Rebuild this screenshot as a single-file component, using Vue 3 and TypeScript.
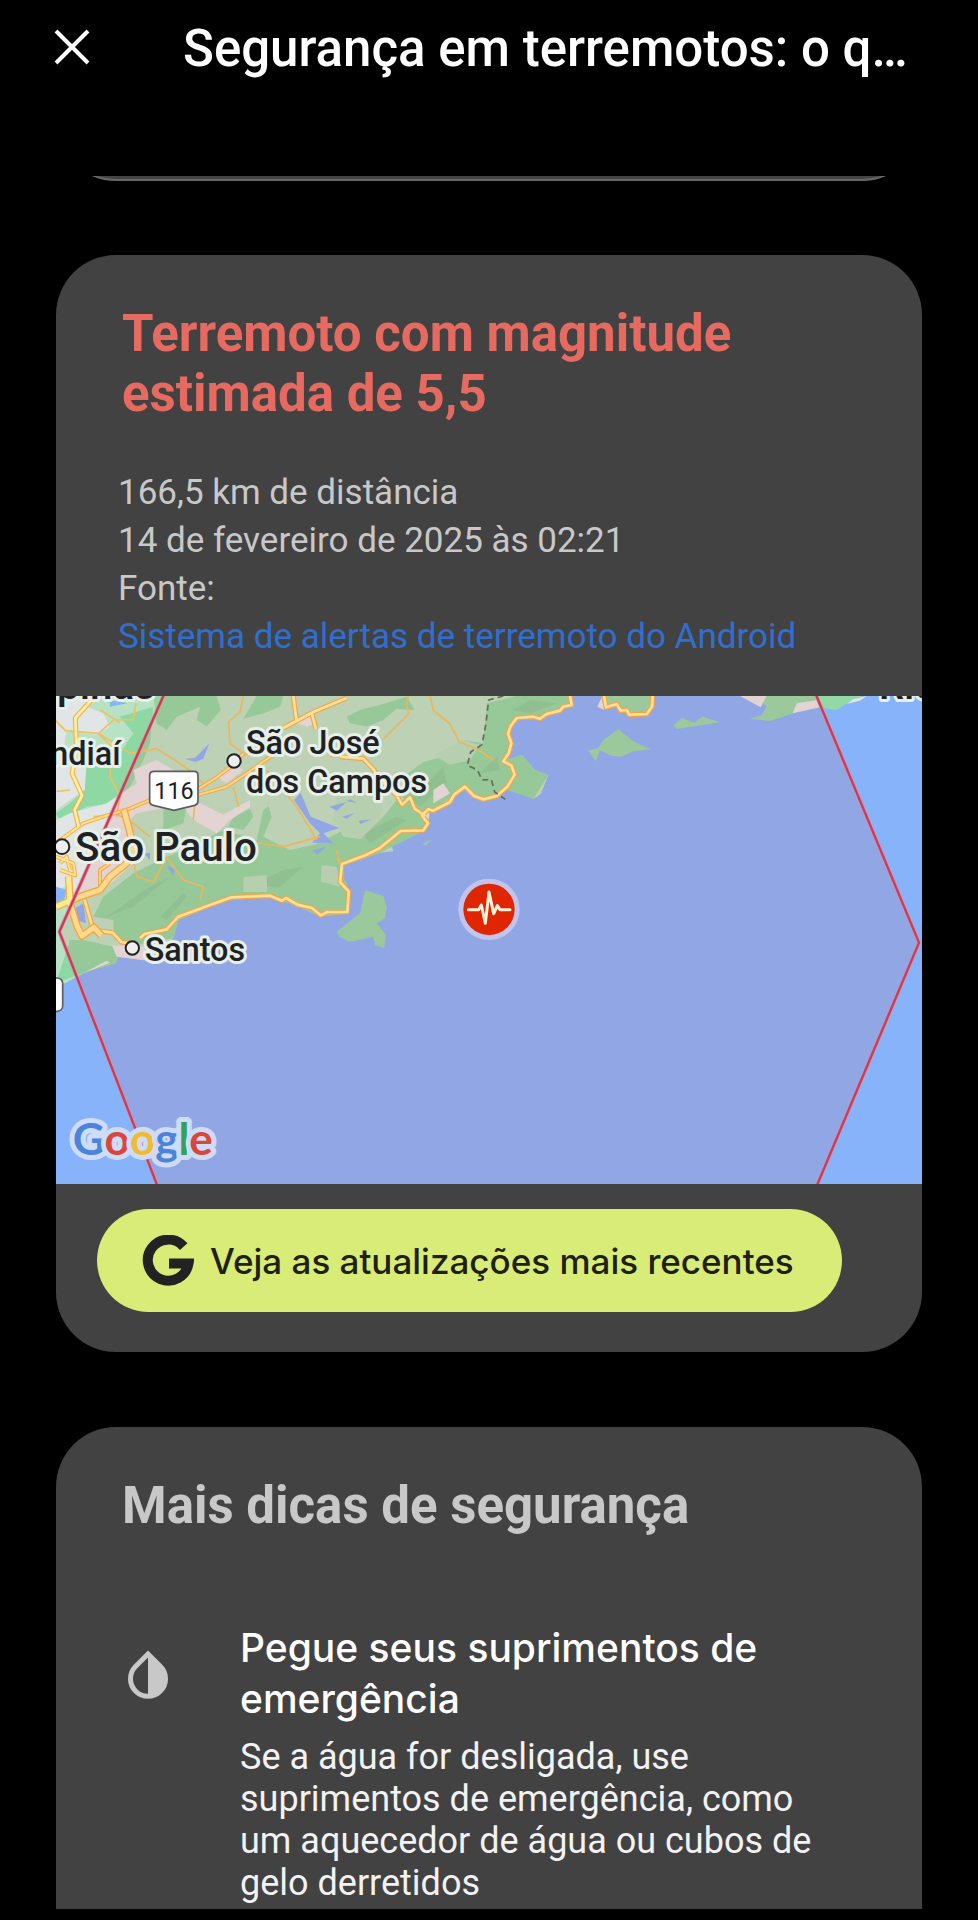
<script setup lang="ts">
interface Tip {
  title: string
  body: string
}

const title = 'Segurança em terremotos: o que fazer'
const details: string[] = ['166,5 km de distância', '14 de fevereiro de 2025 às 02:21', 'Fonte:']
const tips: Tip[] = [
  {
    title: 'Pegue seus suprimentos de emergência',
    body: 'Se a água for desligada, use suprimentos de emergência, como um aquecedor de água ou cubos de gelo derretidos',
  },
]

const majorRoads: string[] = [
  'M1560 18 L1565 45 L1540 50 L1530 62 L1490 72 L1470 86 L1450 80 L1400 84 L1382 108 L1374 130 L1384 160 L1376 190 L1360 214 L1384 226 L1394 254 L1372 290 L1340 318 L1300 328 L1272 318 L1245 290 L1212 314 L1200 336 L1150 362 L1135 358 L1116 376 L1134 400 L1120 421 L1052 423 L990 474 L950 494 L876 522 L870 576 L896 604 L892 666 L832 666 L812 676 L786 654 L742 644 L708 624 L696 632 L660 617 L545 622 L480 645 L385 680 L350 718 L284 732 L270 745',
  'M1662 18 L1668 52 L1700 42 L1712 62 L1730 60 L1738 74 L1790 72 L1806 50 L1808 18',
  'M870 200 L940 206 L972 240 L984 262 L1040 316 L1056 344 L1080 322 L1094 356 L1126 378',
  'M730 18 L740 96 M700 114 L790 66 L890 24 M786 72 L798 118',
  'M130 24 L76 84 L80 180 L66 250 L96 316 L74 360 L86 410',
  'M104 630 L130 720 L188 728 L214 756 L240 760',
]
const mediumRoads: string[] = [
  'M18 460 L58 430 L100 400 L160 380 L240 356 L300 330',
  'M440 316 L530 290 L590 250 L690 180',
  'M440 300 L500 262 L540 232 L580 190',
  'M18 500 L70 520 L76 556 L30 540',
  'M150 600 L150 540 L180 520',
  'M30 520 L50 500 L60 540',
]
const motorways: string[] = [
  'M222 360 L238 420 L250 470 L230 520 L180 560 L150 600 L90 620 L18 650',
  'M56 560 L60 640 L82 710 L96 738 L132 712 L154 736',
]
const minorRoads: string[] = [
  'M18 92 L46 122 L146 130 L240 190 L320 176 L380 214 L430 250 L470 290',
  'M146 130 L190 90 L250 88 L258 40 M150 60 L210 98',
  'M146 130 L184 170 L180 260 L210 320 L200 380',
  'M580 18 L570 66 L536 96 L540 160 L580 190 L620 200',
  'M1076 18 L1070 40 L1076 72 L1000 148 M1140 18 L1150 60 L1200 102 L1228 156 L1286 180 L1330 210',
  'M550 290 L566 350 M436 320 L430 390 M650 240 L740 350 L800 450 M560 450 L700 470 L810 440',
  'M244 480 L260 560 L310 576 L350 500 M350 500 L400 570 L460 590 L450 630 M60 300 L20 304',
  'M860 480 L870 530 M840 200 L890 204 M130 380 L200 372 L250 400 L300 440',
]
</script>

<template>
  <div class="page">
    <header class="bar">
      <button class="close" type="button" aria-label="Fechar">
        <svg viewBox="0 0 36 36" aria-hidden="true"><path d="M2 2 L34 34 M34 2 L2 34" /></svg>
      </button>
      <h1>{{ title }}</h1>
    </header>

    <main>
      <div class="previous"><div class="previous-card"></div></div>

      <section class="card">
        <h2 class="alert">Terremoto com magnitude estimada de 5,5</h2>
        <div class="details">
          <p v-for="line in details" :key="line">{{ line }}</p>
          <a href="#fonte">Sistema de alertas de terremoto do Android</a>
        </div>

        <svg class="map" viewBox="18 18 2598 1464" preserveAspectRatio="xMidYMid slice" role="img" aria-label="Mapa da área afetada">
          <rect class="sea" x="0" y="0" width="2640" height="1500" />
          <path class="plain" d="M0 0 H1560 L1565 45 L1470 86 L1400 84 L1376 120 L1384 160 L1362 212 L1415 195 L1455 240 L1495 256 L1472 312 L1450 327 L1420 310 L1372 300 L1300 330 L1245 292 L1200 338 L1140 366 L1120 378 L1136 400 L1120 424 L1086 436 L1050 448 L1026 470 L1030 484 L990 488 L876 528 L872 576 L898 606 L894 670 L812 680 L742 648 L660 620 L545 626 L480 650 L385 690 L370 745 L290 812 L205 800 L195 822 L175 816 L100 850 L45 880 L0 892 Z" />
          <g class="forest">
            <path d="M310 18 L500 18 L512 60 L470 110 L440 90 L450 50 L380 80 L350 120 L320 100 Z" />
            <path d="M620 18 H700 L690 50 L640 70 L580 86 Z" />
            <path d="M210 80 L310 50 L300 160 L280 210 L240 290 L190 340 L110 350 L30 390 L18 370 L60 340 L104 300 L110 230 L210 190 L250 130 Z" />
            <path d="M520 420 L620 450 L640 360 L655 348 L665 380 L640 440 L720 480 L800 462 L880 420 L930 448 L1000 380 L1040 330 L1060 350 L1060 260 L1120 216 L1180 200 L1240 150 L1300 160 L1310 40 L1400 18 L1560 18 L1565 45 L1470 86 L1400 84 L1376 120 L1384 160 L1362 212 L1415 195 L1455 240 L1495 256 L1450 327 L1372 300 L1300 330 L1245 292 L1140 366 L1136 400 L1120 424 L1026 470 L990 488 L876 528 L898 606 L894 670 L812 680 L742 648 L660 620 L545 626 L480 650 L385 690 L370 745 L230 770 L190 740 L190 690 L130 680 L160 620 L250 550 L330 510 L400 480 Z" />
            <path d="M18 880 L60 750 L100 750 L190 770 L205 800 L195 822 L100 848 Z" />
            <path d="M890 80 L930 60 L1000 42 L1070 20 L1094 60 L1040 56 L1000 90 L950 110 L900 100 Z" />
            <path d="M535 410 L550 380 L600 356 L610 380 L580 420 Z M340 360 L410 350 L400 400 L340 420 Z" />
          </g>
          <g class="ridge">
            <path d="M170 680 L300 590 L360 560 L250 650 Z M330 680 L400 610 L410 620 L350 690 Z M600 590 L700 540 L760 530 L690 590 Z M940 430 L1040 380 L1070 390 L960 460 Z M1080 330 L1180 230 L1190 280 L1110 350 Z M1290 250 L1340 200 L1350 240 Z M1390 60 L1440 30 L1520 40 L1440 70 Z" />
          </g>
          <g class="clearing">
            <path d="M860 320 L930 280 L980 320 L1000 360 L960 420 L930 448 L880 440 L850 390 Z" />
            <path d="M1150 196 L1240 150 L1290 165 L1260 210 L1200 224 Z M580 560 L650 556 L652 606 L580 606 Z M815 525 L860 530 L870 590 L812 575 Z" />
          </g>
          <g class="town">
            <path d="M18 18 H170 L110 50 L160 70 L180 110 L140 134 L50 122 L40 180 L110 190 L104 300 L18 360 Z" />
            <path d="M18 390 L60 370 L170 340 L260 280 L250 240 L320 210 L370 240 L420 300 L360 350 L260 370 L230 400 L260 440 L250 520 L160 600 L90 620 L50 590 L18 600 Z" />
            <path d="M400 350 L450 340 L520 374 L600 330 L600 352 L540 390 L500 430 L430 390 Z" />
            <path d="M500 260 L550 220 L580 240 L530 280 Z M740 100 L790 66 L800 100 L770 110 Z M186 766 L290 770 L300 812 L200 800 Z M100 850 L170 812 L180 818 Z M1150 300 L1180 280 L1200 310 L1150 340 Z" />
          </g>
          <g class="sea">
            <path d="M404 206 L435 204 L478 160 L460 206 L436 216 Z M178 30 L232 40 L180 50 Z" />
            <path d="M732 330 L752 308 L782 380 L868 414 L820 430 L850 460 L786 458 L810 430 L780 400 Z M838 350 L890 336 L860 362 Z M876 380 L912 370 L890 386 Z M926 392 L966 388 L930 402 Z M890 334 L920 338 L900 328 Z M790 480 L830 470 L800 494 Z" />
            <path d="M350 524 L374 540 L370 560 Z M18 590 L50 600 L40 640 L18 650 Z M66 660 L100 640 L108 700 L80 690 Z M280 490 L300 488 L300 510 Z M880 560 L892 540 L900 600 Z" />
          </g>
          <g class="island">
            <path d="M945 600 L1000 618 L1010 650 L1005 685 L980 700 L1008 735 L1002 775 L975 765 L970 740 L900 756 L868 740 L860 725 L930 670 Z" />
            <path d="M1615 182 L1645 174 L1660 150 L1705 118 L1752 155 L1802 178 L1750 184 L1712 200 L1680 196 L1650 180 L1637 213 Z" />
            <path d="M1870 106 L1895 84 L1932 98 L1958 80 L2010 97 L1880 117 Z" />
            <path d="M1660 18 L1668 52 L1700 46 L1715 66 L1738 78 L1790 72 L1806 50 L1808 18 Z" />
            <path d="M2120 18 L2150 50 L2134 76 L2100 86 L2160 93 L2222 72 L2290 50 L2360 60 L2390 40 L2440 18 Z" />
            <path d="M1118 460 L1144 450 L1128 466 Z" />
          </g>
          <g class="town">
            <path d="M2070 18 H2150 L2132 52 Z M2228 70 L2240 40 L2300 30 L2310 52 Z M2390 42 L2410 28 L2450 18 L2430 32 Z M1642 50 L1656 20 L1662 60 Z M1120 372 L1138 366 L1136 390 Z" />
          </g>

          <path v-for="d in minorRoads" :key="d" class="minor" :d="d" />
          <g class="medium-case"><path v-for="d in mediumRoads" :key="d" :d="d" /></g>
          <g class="medium"><path v-for="d in mediumRoads" :key="d" :d="d" /></g>
          <g class="major-case"><path v-for="d in majorRoads" :key="d" :d="d" /></g>
          <g class="major"><path v-for="d in majorRoads" :key="d" :d="d" /></g>
          <g class="motor-case"><path v-for="d in motorways" :key="d" :d="d" /></g>
          <g class="motor"><path v-for="d in motorways" :key="d" :d="d" /></g>
          <path class="border" d="M1360 18 L1316 30 L1308 100 L1296 164 L1262 186 L1252 226 L1282 240 L1296 270 L1324 268 L1334 306 L1366 328" />

          <path class="zone" d="M340 18 L2300 18 L2607 758 L2303 1482 L320 1482 L28 725 Z" />
          <path class="zone-glow" d="M348 0 L28 725 L327 1500 M2292 0 L2607 758 L2295 1500" />
          <path class="zone-line" d="M348 0 L28 725 L327 1500 M2292 0 L2607 758 L2295 1500" />

          <g class="town-dot">
            <circle cx="552" cy="213" r="20" />
            <circle cx="36" cy="470" r="22" />
            <circle cx="247" cy="774" r="20" />
          </g>
          <path class="shield" d="M312 244 H432 Q444 244 444 256 V334 Q444 344 434 346 L372 361 L310 346 Q299 344 299 334 V256 Q299 244 312 244 Z" />
          <rect class="shield" x="-30" y="864" width="68" height="100" rx="16" />
          <text class="road-number" x="372" y="326">116</text>

          <g class="place">
            <text class="city" x="315" y="26" text-anchor="end">Campinas</text>
            <text x="212" y="225" text-anchor="end">Jundiaí</text>
            <text x="588" y="192">São José</text>
            <text x="588" y="308">dos Campos</text>
            <text x="284" y="813">Santos</text>
            <text class="city" x="75" y="514">São Paulo</text>
            <text class="city" x="2486" y="26">Rio de Janeiro</text>
          </g>

          <text class="google" x="68" y="1394"><tspan class="b">G</tspan><tspan class="r">o</tspan><tspan class="y">o</tspan><tspan class="b">g</tspan><tspan class="g">l</tspan><tspan class="r">e</tspan></text>

          <circle class="halo" cx="1317" cy="658" r="92" />
          <circle class="pin" cx="1317" cy="658" r="77" />
          <path class="pulse" d="M1255 659 H1286 L1294 645 L1306 700 L1317 606 L1331 671 L1342 647 L1350 659 H1380" />
        </svg>

        <div class="actions">
          <button class="updates" type="button">
            <svg viewBox="0 0 52 52" aria-hidden="true">
              <path d="M41.700 11.600 A20.500 20.500 0 1 0 46.500 28.500 H27" />
            </svg>
            <span>Veja as atualizações mais recentes</span>
          </button>
        </div>
      </section>

      <section class="card tips">
        <h2>Mais dicas de segurança</h2>
        <article v-for="tip in tips" :key="tip.title" class="tip">
          <svg class="drop" viewBox="0 0 42 50" aria-hidden="true">
            <path class="shape" d="M21 4 L8.500 16.500 A17.500 17.500 0 1 0 33.500 16.500 Z" />
            <path class="half" d="M21 4 L33.500 16.500 A17.500 17.500 0 0 1 21 46.500 Z" />
          </svg>
          <div>
            <h3>{{ tip.title }}</h3>
            <p>{{ tip.body }}</p>
          </div>
        </article>
      </section>
    </main>
  </div>
</template>

<style>
html,
body {
  margin: 0;
  background: #000;
}
</style>

<style scoped>
.page {
  box-sizing: border-box;
  min-height: 100vh;
  padding-bottom: 12px;
  background: #000;
  color: #c8c8c8;
  font-family: Roboto, "Noto Sans", sans-serif;
}
h1,
h2,
h3,
p {
  margin: 0;
}
.bar {
  display: flex;
  align-items: center;
  height: 98px;
  padding: 0 70px 0 54px;
}
.close {
  flex: none;
  width: 36px;
  height: 36px;
  margin: 0 93px 4px 0;
  padding: 0;
  border: 0;
  background: none;
}
.close svg {
  display: block;
  width: 36px;
  height: 36px;
  fill: none;
  stroke: #fff;
  stroke-width: 4px;
}
h1 {
  min-width: 0;
  overflow: hidden;
  color: #fff;
  font-size: 51px;
  font-weight: 500;
  line-height: 60px;
  text-overflow: ellipsis;
  white-space: nowrap;
}
main {
  display: flex;
  flex-direction: column;
  padding: 78px 56px 0;
}
.previous {
  display: flex;
  align-items: flex-end;
  height: 5px;
  margin-bottom: 74px;
  overflow: hidden;
}
.previous-card {
  box-sizing: border-box;
  width: 100%;
  height: 120px;
  flex: none;
  border-bottom: 2px solid #686868;
  border-radius: 60px;
  background: #444;
}
.card {
  overflow: hidden;
  border-radius: 60px;
  background: #424242;
}
h2 {
  padding: 49px 66px 0;
  font-size: 51px;
  font-weight: 700;
  line-height: 60px;
}
.alert {
  color: #e66a5f;
}
.details {
  padding: 45px 62px 35px;
  font-size: 35px;
  line-height: 48px;
}
.details a {
  color: #2f6fd0;
  text-decoration: none;
}
.map {
  display: block;
  width: 100%;
}
.sea {
  fill: #87b3fa;
}
.plain {
  fill: #b8e2c4;
}
.forest {
  fill: #8dd8a3;
}
.ridge {
  fill: #7fc497;
  opacity: 0.5;
}
.clearing {
  fill: #b0dfbe;
}
.town {
  fill: #e2e5e6;
}
.island {
  fill: #93d9a8;
}
.minor,
.medium,
.medium-case,
.major,
.major-case,
.motor,
.motor-case,
.border,
.zone-line,
.zone-glow,
.pulse {
  fill: none;
  stroke-linejoin: round;
}
.minor {
  stroke: #efc25f;
  stroke-width: 5px;
}
.medium-case {
  stroke: #f2b24a;
  stroke-width: 12px;
}
.medium {
  stroke: #ffe592;
  stroke-width: 6px;
}
.major-case {
  stroke: #f2b24a;
  stroke-width: 15px;
}
.major {
  stroke: #fff2a6;
  stroke-width: 8px;
}
.motor-case {
  stroke: #f2b24a;
  stroke-width: 23px;
}
.motor {
  stroke: #ffea96;
  stroke-width: 15px;
}
.border {
  stroke: #59705f;
  stroke-width: 5px;
  stroke-dasharray: 18 12;
}
.zone {
  fill: #ea4335;
  opacity: 0.1;
}
.zone-glow {
  stroke: #e08ba6;
  stroke-width: 12px;
  opacity: 0.7;
}
.zone-line {
  stroke: #c93c55;
  stroke-width: 7px;
}
.town-dot {
  fill: #eee;
  stroke: #202124;
  stroke-width: 6px;
}
.shield {
  fill: #fff;
  stroke: #5a5d61;
  stroke-width: 5px;
}
.road-number {
  fill: #202124;
  font-size: 70px;
  text-anchor: middle;
}
.place {
  fill: #202124;
  stroke: #e6efe8;
  stroke-width: 18px;
  stroke-linejoin: round;
  paint-order: stroke;
  font-size: 97px;
  font-weight: 500;
}
.city {
  font-size: 121px;
}
.google {
  stroke: #cfdcf7;
  stroke-width: 30px;
  stroke-linejoin: round;
  paint-order: stroke;
  font-family: Lato, sans-serif;
  font-size: 132px;
  font-weight: 700;
}
.b {
  fill: #4a84dc;
}
.r {
  fill: #d8463c;
}
.y {
  fill: #efbb31;
}
.g {
  fill: #35a057;
}
.halo {
  fill: #c2c4ee;
}
.pin {
  fill: #df2600;
}
.pulse {
  stroke: #fff3dc;
  stroke-width: 9px;
  stroke-linecap: round;
}
.actions {
  padding: 25px 80px 40px 41px;
}
.updates {
  display: flex;
  align-items: center;
  width: 100%;
  height: 103px;
  padding: 0 30px 0 45px;
  border: 0;
  border-radius: 52px;
  background: #d9ec78;
  color: #1e2010;
  font-family: Inter, sans-serif;
  font-size: 35px;
  font-weight: 500;
  line-height: 40px;
  white-space: nowrap;
}
.updates svg {
  flex: none;
  width: 52px;
  height: 52px;
  margin-right: 16px;
  fill: none;
  stroke: #222;
  stroke-width: 10px;
}
.tips {
  margin-top: 75px;
  padding-bottom: 5px;
  border-radius: 60px 60px 0 0;
}
.tip {
  display: flex;
  gap: 71px;
  padding: 86px 88px 0 71px;
}
.drop {
  flex: none;
  width: 42px;
  height: 50px;
  margin-top: 28px;
}
.shape {
  fill: none;
  stroke: #c8c8c8;
  stroke-width: 5px;
}
.half {
  fill: #c8c8c8;
}
h3 {
  margin-bottom: 12px;
  color: #fff;
  font-family: Inter, sans-serif;
  font-size: 39px;
  font-weight: 500;
  line-height: 51px;
}
.tip p {
  color: #f2f2f2;
  font-size: 36px;
  line-height: 42px;
}
</style>
